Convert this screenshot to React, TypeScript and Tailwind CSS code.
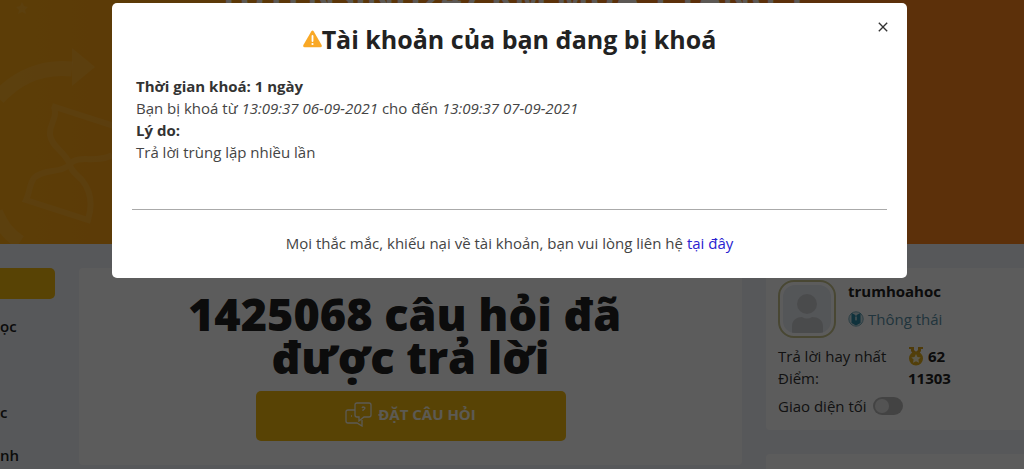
import React, { useState } from 'react';
import { MdClose } from 'react-icons/md';

const subjects = [
  { id: 1, label: 'ọc' },
  { id: 2, label: '' },
  { id: 3, label: 'c' },
  { id: 4, label: 'nh' },
];

const BannerArt = () => (
  <svg className="absolute left-0 top-0 h-[244px] w-[112px]" viewBox="0 0 112 244" fill="none" aria-hidden="true">
    <g stroke="#ffc14d" strokeOpacity="0.35">
      <path d="M-2 98C18 76 44 66 72 69" strokeWidth="15" />
      <path d="M52 106L114 126M54 106C58 120 49 122 50 135C52 147 63 150 70 164C62 174 44 168 34 178C29 185 30 192 26 200L88 220C93 204 90 190 82 180C76 174 70 170 70 164C78 154 96 164 112 155" strokeWidth="6" />
      <path d="M-4 212C2 226 8 234 20 242" strokeWidth="14" />
    </g>
    <path d="M72 48L95 67L72 86Z" fill="#ffc14d" fillOpacity="0.35" />
    <path d="M22 2l2 4 4 1-3 3 1 4-4-2-4 2 1-4-3-3 4-1z" fill="#ffc14d" fillOpacity="0.35" />
  </svg>
);

const WarningIcon = () => (
  <svg className="h-[18px] w-[19px]" viewBox="0 0 19 18" aria-hidden="true">
    <path d="M8.200 1.500Q9.500-.3 10.800 1.500L18.600 15Q19.300 17 17.300 17.300H1.700Q-.3 17 .4 15Z" fill="#f9a825" />
    <path d="M9.500 6v5" stroke="#fff" strokeWidth="1.800" strokeLinecap="round" />
    <circle cx="9.500" cy="14" r="1.100" fill="#fff" />
  </svg>
);

const Avatar = () => (
  <div className="flex h-[58px] w-[58px] shrink-0 rounded-2xl border-2 border-[#c9c68e] p-[3px]">
    <svg className="h-full w-full rounded-xl bg-[#e9edf4]" viewBox="0 0 48 48" aria-hidden="true">
      <circle cx="24" cy="19" r="10" fill="#cdd0d3" />
      <path d="M9 48V41C9 35 14 32 19 32Q24 35 29 32C35 32 40 35 40 41V48Z" fill="#cdd0d3" />
    </svg>
  </div>
);

const RankIcon = () => (
  <svg className="h-4 w-4" viewBox="0 0 16 16" aria-hidden="true">
    <circle cx="8" cy="8" r="7.2" fill="#d0e2e8" stroke="#79aebf" strokeWidth="1" />
    <path d="M3.500 2L6.500 3.500L8 5L9.500 3.500L12.500 2V12L8 14.500L3.500 12Z" fill="#2d8aa6" />
    <path d="M7 5.500h2v3L8 10L7 8.500z" fill="#a5cdd8" />
  </svg>
);

const MedalIcon = () => (
  <svg className="h-5 w-4" viewBox="0 0 16 20" aria-hidden="true">
    <path d="M1 1h5v3l2 2 2-2V1h5v2h-2v2l-2 3H5L3 5V3H1z" fill="#dba31c" />
    <circle cx="8" cy="12.500" r="6" fill="#e3ae1c" stroke="#e3ae1c" strokeWidth="2" />
    <path d="M8 8l1.500 3 3.200.4-2.300 2.200.6 3.200L8 15.200l-3 1.600.6-3.200-2.300-2.200 3.200-.4z" fill="#fff6d0" />
  </svg>
);

const ChatIcon = () => (
  <svg className="h-[25px] w-[27px]" viewBox="0 0 27 25" fill="none" stroke="currentColor" strokeWidth="1.300" aria-hidden="true">
    <path d="M12 1H24Q26 1 26 3V13Q26 15 24 15H19L14 19V15H12Q10 15 10 13V3Q10 1 12 1Z" />
    <path d="M10 8H3Q1 8 1 10V19Q1 21 3 21H12L17 24V18" />
    <path d="M17 6Q18 4 20 6Q20 7 18 8V9M6 14h1" />
  </svg>
);

export default function App() {
  const [open, setOpen] = useState(true);
  const [dark, setDark] = useState(false);

  return (
    <div className="h-screen overflow-hidden bg-[#f1f4f8] font-['Open_Sans','Noto_Sans',sans-serif] text-[15px] leading-[22px] text-[#333]">
      {/* Banner */}
      <header className="relative h-[244px] overflow-hidden bg-linear-to-r from-[#ffaa14] to-[#ff861c] to-60%">
        <BannerArt />
        <p className="-mt-[21px] text-center text-[35px] font-bold leading-[36px] text-white/90">TUYENSINH247 KM MUA 1 TẶNG 1</p>
      </header>

      <div className="flex gap-6 pt-6">
        {/* Subjects */}
        <nav className="w-[55px] shrink-0 font-semibold text-[#222]">
          <button type="button" aria-label="Môn học" className="mb-4 block h-[31px] w-full rounded-r-[5px] bg-[#f3b90f]"></button>
          {subjects.map((subject) => (
            <a key={subject.id} href="#" className="block h-[43px]">{subject.label}</a>
          ))}
        </nav>

        {/* Question counter */}
        <main className="h-[197px] min-w-0 flex-1 rounded bg-white pt-6 text-center">
          <h1 className="text-[45px] font-extrabold leading-[43px] text-[#222]">
            1425068 câu hỏi đã&nbsp;<br />
            được trả lời
          </h1>
          <button type="button" className="mx-auto mt-[13px] flex h-[50px] w-[310px] items-center justify-center gap-1.5 rounded-[5px] bg-[#f3b90f] pb-1 font-bold text-white/90">
            <ChatIcon />
            ĐẶT CÂU HỎI
          </button>
        </main>

        {/* Profile */}
        <aside className="w-[258px] shrink-0 space-y-6">
          <section className="h-[162px] rounded-l bg-white px-3 pt-3">
            <div className="flex gap-3">
              <Avatar />
              <div>
                <p className="font-bold text-[#222]">trumhoahoc</p>
                <p className="mt-1.5 flex items-center gap-1 text-[#5b91a8]">
                  <RankIcon />
                  Thông thái
                </p>
              </div>
            </div>
            <dl className="mt-[7px] grid grid-cols-[130px_1fr]">
              <dt>Trả lời hay nhất</dt>
              <dd className="flex items-center gap-1 font-bold text-[#222]"><MedalIcon />62</dd>
              <dt>Điểm:</dt>
              <dd className="font-bold text-[#222]">11303</dd>
            </dl>
            <label className="mt-1.5 flex items-center gap-1.5">
              Giao diện tối
              <input
                type="checkbox"
                checked={dark}
                onChange={(e) => setDark(e.target.checked)}
                className="h-[18px] w-[30px] appearance-none rounded-full bg-[#bbb] p-0.5 before:block before:h-[14px] before:w-[14px] before:rounded-full before:bg-[#e6e6e6] checked:before:ml-3"
              />
            </label>
          </section>
          <section className="h-[162px] rounded-l bg-white"></section>
        </aside>
      </div>

      {/* Locked account dialog */}
      {open && (
        <div className="fixed inset-0 bg-black/64 pl-[112px] pr-[117px] pt-[3px]">
          <div role="dialog" aria-modal="true" aria-labelledby="lock-title" className="relative mx-auto max-w-[795px] rounded-[5px] bg-white px-5 pb-6 pt-5">
            <button type="button" aria-label="Đóng" onClick={() => setOpen(false)} className="absolute right-4 top-4 text-[#333]">
              <MdClose className="h-4 w-4" />
            </button>
            <h2 id="lock-title" className="flex items-center justify-center text-[25px] font-bold leading-[32px] text-[#222]">
              <WarningIcon />
              Tài khoản của bạn đang bị khoá
            </h2>
            <div className="mt-5 px-1 text-[#444]">
              <p className="font-bold text-[#333]">Thời gian khoá: 1 ngày</p>
              <p>Bạn bị khoá từ <i>13:09:37 06-09-2021</i> cho đến <i>13:09:37 07-09-2021</i></p>
              <p className="font-bold text-[#333]">Lý do:</p>
              <p>Trả lời trùng lặp nhiều lần</p>
            </div>
            <hr className="mt-[46px] border-[#aaa]" />
            <p className="mt-[22px] text-center text-[#444]">
              Mọi thắc mắc, khiếu nại về tài khoản, bạn vui lòng liên hệ <a href="#" className="text-[#2a22d0]">tại đây</a>
            </p>
          </div>
        </div>
      )}
    </div>
  );
}
